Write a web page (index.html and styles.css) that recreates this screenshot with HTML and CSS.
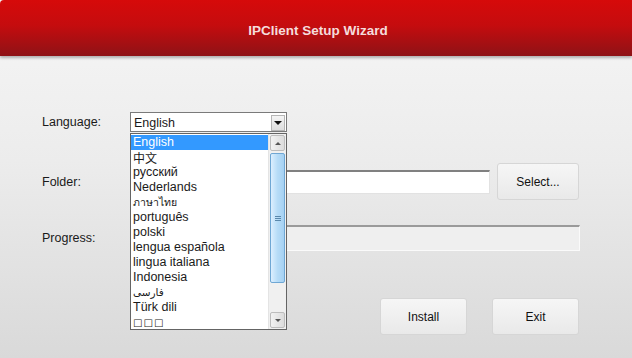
FILE: index.html
```html
<!DOCTYPE html>
<html lang="en">
<head>
    <meta charset="UTF-8">
    <meta name="viewport" content="width=device-width, initial-scale=1.0">
    <title>IPClient Setup Wizard</title>
    <link rel="stylesheet" href="styles.css">
</head>
<body>
    <div class="header">IPClient Setup Wizard</div>

    <div class="main">
        <!-- Idioma -->
        <div class="row row-language">
            <label class="label">Language:</label>
            <div class="select-wrap">
                <div class="select">
                    <span>English</span>
                    <span class="arrow-btn"><span class="caret"></span></span>
                </div>
                <div class="dropdown">
                    <ul class="options">
                        <li class="selected">English</li>
                        <li class="cjk">中文</li>
                        <li>русский</li>
                        <li>Nederlands</li>
                        <li class="small">ภาษาไทย</li>
                        <li>português</li>
                        <li>polski</li>
                        <li>lengua española</li>
                        <li>lingua italiana</li>
                        <li>Indonesia</li>
                        <li class="small">فارسی</li>
                        <li>Türk dili</li>
                        <li class="tofu">□□□</li>
                    </ul>
                    <div class="scrollbar">
                        <div class="sb-btn"><span class="sb-up"></span></div>
                        <div class="sb-track">
                            <div class="sb-thumb"><span class="grip"></span></div>
                        </div>
                        <div class="sb-btn"><span class="sb-down"></span></div>
                    </div>
                </div>
            </div>
        </div>

        <!-- Carpeta -->
        <div class="row row-folder">
            <label class="label">Folder:</label>
            <div class="input"></div>
            <button class="btn btn-select">Select...</button>
        </div>

        <!-- Progreso -->
        <div class="row row-progress">
            <label class="label">Progress:</label>
            <div class="progress"></div>
        </div>

        <div class="row row-actions">
            <button class="btn">Install</button>
            <button class="btn">Exit</button>
        </div>
    </div>
</body>
</html>
```

FILE: styles.css
```css
body {
    font-family: "Liberation Sans", Arial, sans-serif;
    font-size: 12.5px;
    color: #1a1a1a;
    margin: 0;
    width: 632px;
    height: 358px;
    overflow: hidden;
    background: linear-gradient(to bottom, #f6f6f6 0%, #ececec 45%, #d9d9d9 100%);
}
.header {
    height: 56px;
    line-height: 61px;
    text-align: center;
    font-weight: bold;
    font-size: 13.5px;
    color: #f5dcdc;
    padding-left: 4px;
    background: linear-gradient(to bottom, #d60a0a 0%, #c50c0e 45%, #8e1216 100%);
    border-top-left-radius: 4px;
    box-shadow: 0 2px 3px rgba(0, 0, 0, 0.28);
    position: relative;
    z-index: 1;
}
.main {
    padding-left: 42px;
}
.row {
    display: flex;
    align-items: center;
}
.label {
    width: 88px;
    flex-shrink: 0;
}
.row-language {
    height: 20px;
    margin-top: 56px;
    position: relative;
    z-index: 2;
}
.select-wrap {
    position: relative;
    width: 157px;
    height: 20px;
}
.select {
    box-sizing: border-box;
    height: 20px;
    border: 1px solid #7a7a7a;
    background: #fff;
    display: flex;
    align-items: center;
    justify-content: space-between;
    padding-left: 3px;
    padding-top: 1px;
}
.arrow-btn {
    width: 14px;
    height: 16px;
    margin-right: 1px;
    background: linear-gradient(to bottom, #f4f4f4, #dedede);
    border: 1px solid #b5b5b5;
    box-sizing: border-box;
    display: flex;
    align-items: center;
    justify-content: center;
}
.caret {
    width: 0;
    height: 0;
    border-left: 4px solid transparent;
    border-right: 4px solid transparent;
    border-top: 4px solid #111;
}
.dropdown {
    position: absolute;
    left: 0;
    top: 21px;
    width: 157px;
    height: 197px;
    box-sizing: border-box;
    border: 1px solid #646464;
    background: #fff;
    display: flex;
}
.options {
    list-style: none;
    margin: 0;
    padding: 1px 0 0;
    flex: 1;
}
.options li {
    height: 15px;
    line-height: 15px;
    padding-left: 2px;
    white-space: nowrap;
    overflow: hidden;
}
.options li.selected {
    background: #3399ff;
    color: #fff;
}
.options li.cjk {
    font-family: "Noto Sans CJK SC", sans-serif;
    font-size: 12px;
}
.options li.small {
    font-size: 10.5px;
    font-family: "DejaVu Sans", sans-serif;
}
.options li.tofu {
    font-family: "DejaVu Sans", sans-serif;
    font-size: 10px;
    letter-spacing: 1px;
}
.scrollbar {
    width: 17px;
    display: flex;
    flex-direction: column;
    background: #f0f0f0;
    border-left: 1px solid #e4e4e4;
}
.sb-btn {
    height: 16px;
    margin: 1px;
    box-sizing: border-box;
    border: 1px solid #bdbdbd;
    border-radius: 2px;
    background: linear-gradient(to right, #f2f2f2, #dcdcdc);
    display: flex;
    align-items: center;
    justify-content: center;
}
.sb-up {
    border-left: 3px solid transparent;
    border-right: 3px solid transparent;
    border-bottom: 3px solid #555;
}
.sb-down {
    border-left: 3px solid transparent;
    border-right: 3px solid transparent;
    border-top: 3px solid #555;
}
.sb-track {
    flex: 1;
    padding: 1px 1px 28px;
}
.sb-thumb {
    height: 100%;
    box-sizing: border-box;
    border: 1px solid #6fa7d4;
    border-radius: 2px;
    background: linear-gradient(to right, #dcefff, #b7dcf7 50%, #a5d1f3);
    display: flex;
    align-items: center;
    justify-content: center;
}
.grip {
    width: 6px;
    height: 5px;
    border-top: 1px solid #5a88ac;
    border-bottom: 1px solid #5a88ac;
    box-sizing: border-box;
    position: relative;
}
.grip::after {
    content: "";
    position: absolute;
    left: 0;
    right: 0;
    top: 1px;
    border-top: 1px solid #5a88ac;
}
.row-folder {
    height: 37px;
    margin-top: 31px;
}
.input {
    width: 360px;
    height: 24px;
    box-sizing: border-box;
    background: #fff;
    border: 1px solid #e2e2e2;
    border-top: 2px solid #808080;
}
.btn {
    font-family: "Liberation Sans", Arial, sans-serif;
    font-size: 12px;
    color: #111;
    width: 87px;
    height: 37px;
    border: 1px solid #d6d6d6;
    border-radius: 3px;
    background: linear-gradient(to bottom, #f6f6f6, #e9e9e9);
    padding: 0;
}
.btn-select {
    width: 82px;
    margin-left: 7px;
}
.row-progress {
    height: 26px;
    margin-top: 25px;
}
.progress {
    width: 450px;
    height: 26px;
    box-sizing: border-box;
    background: #efefef;
    border: 1px solid #fafafa;
    border-top: 2px solid #9a9a9a;
}
.row-actions {
    height: 37px;
    margin-top: 47px;
    justify-content: flex-end;
    gap: 25px;
    padding-right: 53px;
}
```
